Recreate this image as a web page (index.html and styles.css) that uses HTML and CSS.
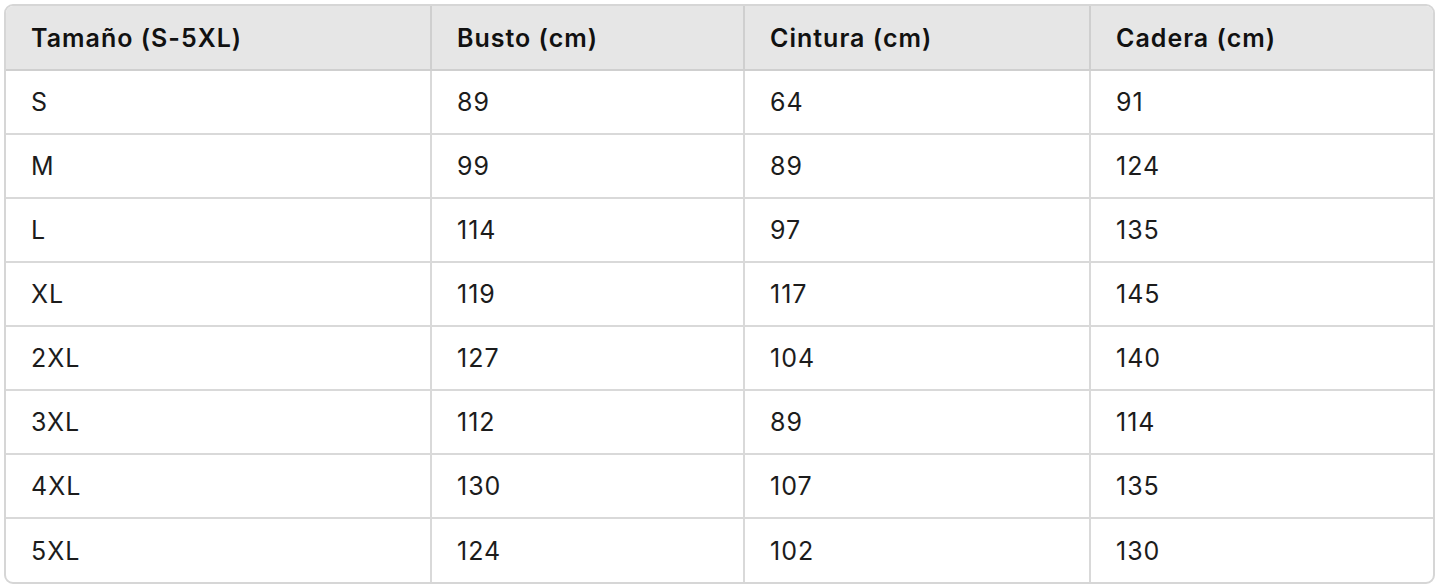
FILE: index.html
```html
<!DOCTYPE html>
<html lang="es">
<head>
<meta charset="utf-8">
<title>Tabla de tallas</title>
<link rel="stylesheet" href="styles.css">
</head>
<body>
<div class="wrap">
<table class="sizes">
<colgroup>
<col class="c1"><col class="c2"><col class="c3"><col class="c4">
</colgroup>
<thead>
<tr><th>Tamaño (S-5XL)</th><th>Busto (cm)</th><th>Cintura (cm)</th><th>Cadera (cm)</th></tr>
</thead>
<tbody>
<tr><td>S</td><td>89</td><td>64</td><td>91</td></tr>
<tr><td>M</td><td>99</td><td>89</td><td>124</td></tr>
<tr><td>L</td><td>114</td><td>97</td><td>135</td></tr>
<tr><td>XL</td><td>119</td><td>117</td><td>145</td></tr>
<tr><td>2XL</td><td>127</td><td>104</td><td>140</td></tr>
<tr><td>3XL</td><td>112</td><td>89</td><td>114</td></tr>
<tr><td>4XL</td><td>130</td><td>107</td><td>135</td></tr>
<tr><td>5XL</td><td>124</td><td>102</td><td>130</td></tr>
</tbody>
</table>
</div>
</body>
</html>
```
FILE: styles.css
```css
html, body {
  margin: 0;
  padding: 0;
  background: #ffffff;
}
body {
  padding: 4px 10px 0 4px;
  font-family: Inter, "Liberation Sans", sans-serif;
  color: #1c1c1c;
}
.wrap {
  width: 1431px;
  border: 2px solid #d6d6d6;
  border-radius: 9px;
  overflow: hidden;
  box-sizing: border-box;
}
.sizes {
  width: 100%;
  border-collapse: collapse;
  table-layout: fixed;
}
.c1 { width: 425px; }
.c2 { width: 313px; }
.c3 { width: 346px; }
.c4 { width: auto; }
.sizes th, .sizes td {
  text-align: left;
  padding: 0 0 0 25px;
  height: 64px;
  box-sizing: border-box;
  font-size: 25px;
  letter-spacing: 1px;
  border-right: 2px solid #d9d9d9;
  border-bottom: 2px solid #d9d9d9;
}
.sizes th:last-child, .sizes td:last-child { border-right: none; }
.sizes tbody tr:last-child td { border-bottom: none; }
.sizes th {
  background: #e6e6e6;
  font-weight: 600;
  color: #111111;
  height: 64px;
  border-bottom-color: #cfcfcf;
  border-right-color: #cfcfcf;
}
.sizes td {
  font-weight: 400;
}
```
